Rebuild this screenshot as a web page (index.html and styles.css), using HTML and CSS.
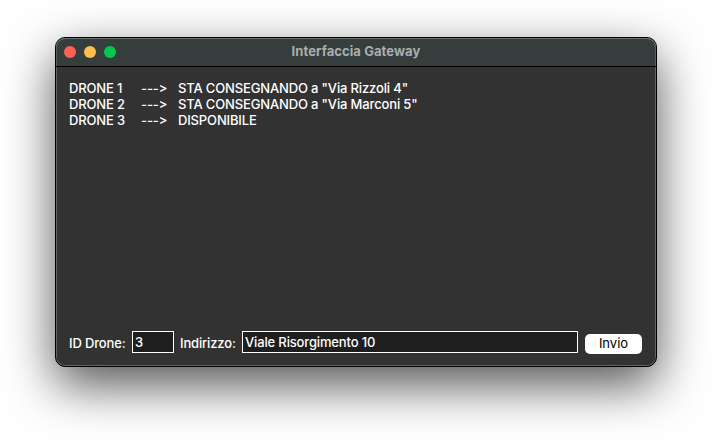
FILE: index.html
```html
<!DOCTYPE html>
<html lang="it">
<head>
<meta charset="utf-8">
<title>Interfaccia Gateway</title>
<link rel="stylesheet" href="styles.css">
</head>
<body>
<main class="window">
  <header class="titlebar">
    <div class="lights">
      <span class="light close"></span>
      <span class="light minimize"></span>
      <span class="light zoom"></span>
    </div>
    <h1 class="title">Interfaccia Gateway</h1>
  </header>
  <section class="drones">
    <span>DRONE 1</span><span class="arrow">---&gt;</span><span>STA CONSEGNANDO a "Via Rizzoli 4"</span>
    <span>DRONE 2</span><span class="arrow">---&gt;</span><span>STA CONSEGNANDO a "Via Marconi 5"</span>
    <span>DRONE 3</span><span class="arrow">---&gt;</span><span>DISPONIBILE</span>
  </section>
  <form class="controls">
    <label class="label-id" for="drone">ID Drone:</label>
    <input class="field field-id" id="drone" type="text" value="3">
    <label class="label-address" for="address">Indirizzo:</label>
    <input class="field field-address" id="address" type="text" value="Viale Risorgimento 10">
    <button class="send" type="button">Invio</button>
  </form>
</main>
</body>
</html>
```
FILE: styles.css
```css
* { box-sizing: border-box; }

body {
  margin: 0;
  height: 440px;
  padding: 37px 55px 0;
  overflow: hidden;
  background: #fff;
  font: 500 13px/16px Inter, "Liberation Sans", sans-serif;
  letter-spacing: -.15px;
  color: #fff;
}

.window {
  display: flex;
  flex-direction: column;
  height: 330px;
  border: 1px solid #000;
  border-radius: 10px;
  background: #323232;
  box-shadow: inset 0 0 0 1px #636363, 0 18px 50px rgba(0, 0, 0, .68);
}

.titlebar {
  display: grid;
  grid-template-columns: 60px 1fr 60px;
  align-items: center;
  height: 29px;
  padding: 0 8px;
  border-bottom: 1px solid #000;
  border-radius: 9px 9px 0 0;
  background: #353e3c;
  box-shadow: inset 0 1px #68706e, inset 1px 0 #59605e, inset -1px 0 #59605e;
}

.lights { display: flex; gap: 8px; }
.light { width: 12px; height: 12px; border-radius: 50%; }
.close { background: #ff5f57; }
.minimize { background: #ffbd4b; }
.zoom { background: #00c850; }

.title {
  margin: 0;
  padding-bottom: 2px;
  text-align: center;
  font-size: 13px;
  font-weight: 700;
  line-height: 16px;
  letter-spacing: .08px;
  color: #a9afae;
}

.drones {
  display: grid;
  grid-template-columns: 72px 37px 1fr;
  grid-auto-rows: 16px;
  flex: 1;
  align-content: start;
  padding: 13px 13px 0;
  white-space: nowrap;
}

.arrow {
  font-feature-settings: "calt" 0, "liga" 0;
  letter-spacing: -.1px;
}

.controls {
  display: flex;
  align-items: flex-start;
  margin: 0;
  padding: 0 14px 12px 13px;
}

.label-id { width: 63px; padding-top: 4px; white-space: nowrap; }
.label-address { width: 62px; margin-left: 6px; padding-top: 4px; white-space: nowrap; }

.field {
  height: 22px;
  margin: 0;
  padding: 0 2px;
  border: 1px solid #fff;
  border-radius: 0;
  outline: 0;
  background: #1e1e1e;
  color: #fff;
  font: inherit;
  letter-spacing: inherit;
}
.field-id { width: 42px; }
.field-address { width: 336px; }

.send {
  width: 57px;
  height: 20px;
  margin: 3px 0 0 7px;
  padding: 0 0 2px;
  border: 0;
  border-radius: 5px;
  background: #fff;
  color: #000;
  font: inherit;
  font-weight: 400;
  letter-spacing: 0;
}
```
